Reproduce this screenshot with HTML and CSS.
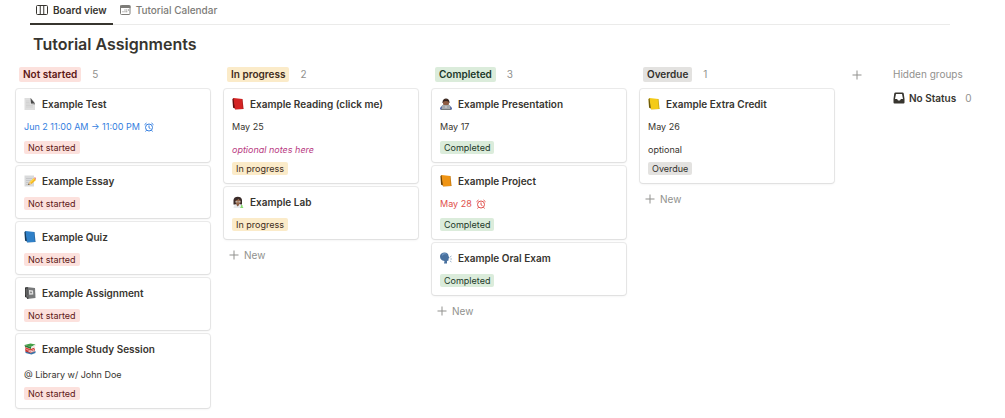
FILE: index.html
```html
<!DOCTYPE html>
<html lang="en">
  <head>
    <meta charset="utf-8">
    <title>Tutorial Assignments</title>
    <meta name="viewport" content="width=device-width, initial-scale=1">
    <link rel="stylesheet" href="styles.css">
  </head>
  <body>
    <!-- shared icons -->
    <svg class="sprite" aria-hidden="true">
      <symbol id="plus" viewBox="0 0 10 10">
        <path d="M5 .5v9M.5 5h9" fill="none" stroke="currentColor" stroke-width="1"/>
      </symbol>
      <symbol id="alarm" viewBox="0 0 20 20">
        <g fill="none" stroke="currentColor" stroke-width="2">
          <circle cx="10" cy="11" r="7"/>
          <path d="M10 7v4.500l3 2M1 5.500L5 2M19 5.500L15 2M5 16.500l-2 2.500M15 16.500l2 2.500"/>
        </g>
      </symbol>
      <symbol id="book" viewBox="0 0 24 24">
        <path d="M1 2l3-2 3 22-5-3z" fill="currentColor"/>
        <path d="M1 2l3-2 3 22-5-3z" fill="#000" fill-opacity=".55"/>
        <path d="M3 20l4 3 16-1v-2z" fill="#cfcfcf"/>
        <path d="M3 0l18 2 2 20-17 1z" fill="currentColor"/>
        <path d="M19.500 1.800L21 2l2 20-1.500.1z" fill="#000" fill-opacity=".2"/>
      </symbol>
    </svg>

    <nav class="tabs">
      <a class="tab active" href="#board" aria-current="page">
        <svg class="tab-icon" viewBox="0 0 24 24" aria-hidden="true">
          <g fill="none" stroke="currentColor" stroke-width="2">
            <rect x="1" y="3" width="22" height="18" rx="2"/>
            <path d="M8.500 3v18M15.500 3v18"/>
          </g>
        </svg>
        Board view
      </a>
      <a class="tab" href="#calendar">
        <svg class="tab-icon" viewBox="0 0 24 24" aria-hidden="true">
          <rect x="3" y="3" width="19" height="18" rx="2" fill="none" stroke="currentColor" stroke-width="2"/>
          <path d="M2 3h21v5H2z" fill="currentColor"/>
          <path d="M11 11h2v2h-2zM14.500 11h2v2h-2zM18 11h2v2h-2zM7 14.500h2v2H7zM11 14.500h2v2h-2zM14.500 14.500h2v2h-2z" fill="currentColor"/>
        </svg>
        Tutorial Calendar
      </a>
    </nav>

    <main id="board">
      <h1>Tutorial Assignments</h1>

      <div class="board">
        <section class="column">
          <header class="column-head">
            <h2 class="group red">Not started</h2>
            <span class="count">5</span>
          </header>

          <article class="card">
            <h3>
              <svg class="emoji" viewBox="0 0 24 24" aria-hidden="true">
                <path d="M1 0h13l8 9v15H1z" fill="#dedede"/>
                <path d="M13 0l9 11-8-1z" fill="#4b4b4b"/>
                <path d="M14 10h8v3l-8-1z" fill="#8d8d8d"/>
                <path d="M4 6h7M4 9h7M4 12h8M4 15h14M4 18h14" stroke="#c6c6c6"/>
              </svg>
              Example Test
            </h3>
            <p class="date reminder">Jun 2 11:00 AM → 11:00 PM <svg class="alarm" aria-hidden="true"><use href="#alarm"/></svg></p>
            <span class="tag red">Not started</span>
          </article>

          <article class="card">
            <h3>
              <svg class="emoji" viewBox="0 0 24 24" aria-hidden="true">
                <path d="M1 1h19v22H1z" fill="#d9dadb"/>
                <path d="M4 7h13M4 11h11M4 15h7M4 19h6" stroke="#b2b4b6"/>
                <path d="M8 20l3-6 9-8 4 4-9 8z" fill="#f5b921"/>
                <path d="M11 14l9-8 1.500 1.500L12.500 16z" fill="#ffdc55"/>
                <path d="M20 6l2-2 3 4-1 2z" fill="#e8838a"/>
                <path d="M8 20l3-6 4 4z" fill="#eec79b"/>
                <path d="M8 20l1.500-3 2 1.500z" fill="#333"/>
              </svg>
              Example Essay
            </h3>
            <span class="tag red">Not started</span>
          </article>

          <article class="card">
            <h3><svg class="emoji blue-book" aria-hidden="true"><use href="#book"/></svg>Example Quiz</h3>
            <span class="tag red">Not started</span>
          </article>

          <article class="card">
            <h3>
              <svg class="emoji" viewBox="0 0 24 24" aria-hidden="true">
                <path d="M2 1l4-1 1 22-5-2z" fill="#333"/>
                <path d="M5 0l17 2 1 20-17 2z" fill="#77797a"/>
                <path d="M5 0l3 .5L9 23.500 6 24z" fill="#4c4d4e"/>
                <path d="M10 6l8 1 .5 8-8 .5z" fill="#e2e2e2"/>
                <path d="M12 9l4 .4.2 3-4 .1z" fill="#8b8b8b"/>
                <path d="M3 6h4M3 10h4M3 14h4M4 18h4" stroke="#bbb"/>
              </svg>
              Example Assignment
            </h3>
            <span class="tag red">Not started</span>
          </article>

          <article class="card">
            <h3>
              <svg class="emoji" viewBox="0 0 24 24" aria-hidden="true">
                <path d="M3 16l12 3 8-3v4l-8 3-12-3z" fill="#3b74a8"/>
                <path d="M2 12l11 4 9-4v4l-9 4-10-3z" fill="#c9302c"/>
                <path d="M5 14.500l8 2.500 8-3v2l-8 3z" fill="#eee"/>
                <path d="M2 8l11 4 8-3v3l-8 3-10-3z" fill="#d5423b"/>
                <path d="M1 4l12-3 10 2-9 5z" fill="#43a047"/>
                <path d="M1 4l13 4v4L2 7.500z" fill="#2c7a35"/>
                <path d="M14 8l9-5v3l-9 5z" fill="#e6e8df"/>
              </svg>
              Example Study Session
            </h3>
            <p class="note">@ Library w/ John Doe</p>
            <span class="tag red">Not started</span>
          </article>
        </section>

        <section class="column">
          <header class="column-head">
            <h2 class="group yellow">In progress</h2>
            <span class="count">2</span>
          </header>

          <article class="card">
            <h3><svg class="emoji red-book" aria-hidden="true"><use href="#book"/></svg>Example Reading (click me)</h3>
            <p class="date">May 25</p>
            <p class="note pink">optional notes here</p>
            <span class="tag yellow">In progress</span>
          </article>

          <article class="card">
            <h3>
              <svg class="emoji" viewBox="0 0 24 24" aria-hidden="true">
                <path d="M3 17V8c0-9 17-9 17 0v9z" fill="#392b29"/>
                <path d="M3 24c0-6 4-8 9-8s9 2 9 8z" fill="#e7eaec"/>
                <path d="M9 14h5v4l-2.500 3L9 18z" fill="#80553e"/>
                <ellipse cx="12" cy="11" rx="5" ry="6" fill="#98694c"/>
                <path d="M6 9c4 0 6-2 7-4 1 2 3 4 5 4-1-8-12-8-12 0z" fill="#392b29"/>
                <path d="M7 10h4v3H7zM13 10h4v3h-4z" fill="#d7e1e5" fill-opacity=".6"/>
                <path d="M18 18h3v3l2 3h-7l2-3z" fill="#85dc72"/>
              </svg>
              Example Lab
            </h3>
            <span class="tag yellow">In progress</span>
          </article>

          <button class="new" type="button"><svg class="plus" aria-hidden="true"><use href="#plus"/></svg>New</button>
        </section>

        <section class="column">
          <header class="column-head">
            <h2 class="group green">Completed</h2>
            <span class="count">3</span>
          </header>

          <article class="card">
            <h3>
              <svg class="emoji" viewBox="0 0 24 24" aria-hidden="true">
                <path d="M0 23c0-6 5-9 12-9s12 3 12 9z" fill="#4057a0"/>
                <path d="M5 10C4-2 20-2 19 10z" fill="#30211d"/>
                <ellipse cx="12" cy="10" rx="6" ry="7" fill="#8d5c43"/>
                <path d="M6 8c0-7 12-7 12 0-3-3-9-3-12 0z" fill="#30211d"/>
                <path d="M4 14h16l1 9H3z" fill="#a5a9ad"/>
                <path d="M2 22h20v2H2z" fill="#73777b"/>
                <circle cx="12" cy="18" r="1.300" fill="#e8e8e8"/>
              </svg>
              Example Presentation
            </h3>
            <p class="date">May 17</p>
            <span class="tag green">Completed</span>
          </article>

          <article class="card">
            <h3><svg class="emoji orange-book" aria-hidden="true"><use href="#book"/></svg>Example Project</h3>
            <p class="date overdue">May 28 <svg class="alarm" aria-hidden="true"><use href="#alarm"/></svg></p>
            <span class="tag green">Completed</span>
          </article>

          <article class="card">
            <h3>
              <svg class="emoji" viewBox="0 0 24 24" aria-hidden="true">
                <path d="M8 23l1-5C3 17 0 14 0 9 0 4 4 1 9 1s8 3 8 7l2 4-2 1v4l-3 1v5z" fill="#49719f"/>
                <path d="M4 4c3-3 9-2 10 1-4-1-7 0-10 3z" fill="#6b93bd"/>
                <path d="M20 10l3-2M20.500 14H24M20 18l3 2" stroke="#7f9dbb" stroke-width="1.500"/>
              </svg>
              Example Oral Exam
            </h3>
            <span class="tag green">Completed</span>
          </article>

          <button class="new" type="button"><svg class="plus" aria-hidden="true"><use href="#plus"/></svg>New</button>
        </section>

        <section class="column">
          <header class="column-head">
            <h2 class="group gray">Overdue</h2>
            <span class="count">1</span>
          </header>

          <article class="card">
            <h3><svg class="emoji yellow-book" aria-hidden="true"><use href="#book"/></svg>Example Extra Credit</h3>
            <p class="date">May 26</p>
            <p class="note">optional</p>
            <span class="tag gray">Overdue</span>
          </article>

          <button class="new" type="button"><svg class="plus" aria-hidden="true"><use href="#plus"/></svg>New</button>
        </section>

        <button class="add-group" type="button" aria-label="Add a group"><svg class="plus" aria-hidden="true"><use href="#plus"/></svg></button>

        <aside class="hidden-groups">
          <h2>Hidden groups</h2>
          <a class="hidden-group" href="#no-status">
            <svg class="inbox" viewBox="0 0 24 24" aria-hidden="true">
              <path d="M5 1h14q2 0 2.500 2L23 14v7q0 2-2 2H3q-2 0-2-2v-7L2.500 3Q3 1 5 1zM6 4L4 14h4.500c.5 4 6.500 4 7 0H20L18 4z" fill="currentColor" fill-rule="evenodd"/>
            </svg>
            No Status
            <span class="count">0</span>
          </a>
        </aside>
      </div>
    </main>
  </body>
</html>
```
FILE: styles.css
```css
body {
  margin: 0;
  background: #fff;
  color: #37352f;
  font-family: Inter, "Liberation Sans", sans-serif;
  font-size: 9px;
}

h1, h2, h3, p {
  margin: 0;
}

a {
  color: inherit;
  text-decoration: none;
}

button {
  padding: 0;
  border: none;
  background: none;
  color: #91918e;
  font: inherit;
  cursor: pointer;
}

svg {
  flex: none;
}

.sprite {
  display: none;
}

/* view tabs */
.tabs {
  display: flex;
  margin: 0 55px 0 30px;
  border-bottom: 1px solid #ebebea;
}

.tab {
  display: flex;
  align-items: center;
  gap: 5px;
  height: 20px;
  margin-bottom: -1px;
  padding: 0 6px 3px;
  border-bottom: 2px solid transparent;
  color: #7d7c78;
  font-size: 10px;
  font-weight: 500;
}

.active {
  border-color: #37352f;
  color: #37352f;
  font-weight: 600;
}

.tab-icon {
  width: 12px;
  height: 12px;
}

h1 {
  margin: 9px 33px 13px;
  font-size: 16px;
  line-height: 20px;
  font-weight: 600;
}

/* board */
.board {
  display: grid;
  grid-template-columns: repeat(4, minmax(0, 1fr)) 18px 111px;
  align-items: start;
  gap: 14px;
  padding: 0 14px 8px 16px;
}

.column {
  display: flex;
  flex-direction: column;
  gap: 4px;
}

.column-head {
  display: flex;
  align-items: center;
  gap: 11px;
  margin-bottom: 3px;
  padding-left: 3px;
}

.group {
  padding: 0 4px;
  border-radius: 2px;
  font-size: 10px;
  line-height: 15px;
  font-weight: 600;
}

.count {
  color: #91918e;
  font-size: 10px;
  line-height: 15px;
  font-weight: 400;
}

.card {
  display: flex;
  flex-direction: column;
  align-items: flex-start;
  padding: 7px 8px 8px;
  border-radius: 3px;
  background: #fff;
  box-shadow: 0 0 0 1px rgba(15, 15, 15, 0.08), 0 1px 3px rgba(15, 15, 15, 0.08);
}

.card h3 {
  display: flex;
  align-items: center;
  gap: 6px;
  font-size: 10px;
  line-height: 16px;
  font-weight: 600;
}

.emoji {
  width: 12px;
  height: 12px;
}

.blue-book {
  color: #2f80c8;
}

.red-book {
  color: #d42323;
}

.orange-book {
  color: #ef9413;
}

.yellow-book {
  color: #f4cb17;
}

.date,
.note {
  display: flex;
  align-items: center;
  gap: 4px;
  line-height: 13px;
}

.date {
  margin-top: 8px;
}

.note {
  margin-top: 11px;
}

.date + .note {
  margin-top: 10px;
}

.reminder {
  color: #337ee0;
}

.overdue {
  color: #e0504c;
}

.pink {
  color: #b83a82;
  font-style: italic;
}

.alarm {
  width: 10px;
  height: 10px;
}

.tag {
  margin-top: 8px;
  padding: 0 4px;
  border-radius: 2px;
  line-height: 13px;
}

.note + .tag {
  margin-top: 6px;
}

.red {
  background: #fce1dd;
  color: #5d1715;
}

.yellow {
  background: #fbebc9;
  color: #402c1b;
}

.green {
  background: #dbecdb;
  color: #1c3829;
}

.gray {
  background: #e3e2e0;
  color: #32302c;
}

.new {
  display: flex;
  align-items: center;
  align-self: flex-start;
  gap: 5px;
  margin: 4px 5px;
  font-size: 10px;
  line-height: 16px;
}

.plus {
  width: 10px;
  height: 10px;
}

.add-group {
  display: flex;
  align-items: center;
  justify-content: center;
  height: 15px;
}

/* hidden groups */
.hidden-groups {
  padding-left: 13px;
}

.hidden-groups h2 {
  color: #91918e;
  font-size: 10px;
  line-height: 15px;
  font-weight: 400;
}

.hidden-group {
  display: flex;
  align-items: center;
  gap: 4px;
  margin-top: 8px;
  font-size: 10px;
  line-height: 16px;
  font-weight: 600;
}

.hidden-group .count {
  margin-left: 5px;
}

.inbox {
  width: 12px;
  height: 12px;
}
```
